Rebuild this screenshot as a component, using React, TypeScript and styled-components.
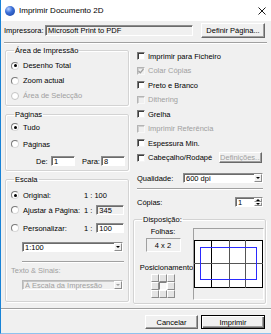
import styled, { createGlobalStyle } from "styled-components";

const GlobalStyle = createGlobalStyle`
  html, body { margin: 0; padding: 0; background: #fff; }
  body {
    font-family: "Liberation Sans", Arial, sans-serif;
    font-size: 7.5px;
    color: #000;
  }
  * { box-sizing: border-box; }
`;

const Window = styled.div`
  width: 271px;
  height: 334px;
  background: #f0f0f0;
  border-left: 1px solid #1883d7;
  border-bottom: 1px solid #8dc2ee;
  display: flex;
  flex-direction: column;
  overflow: hidden;
`;

const TitleBar = styled.div`
  height: 21px;
  background: #fff;
  display: flex;
  align-items: center;
  padding-left: 4px;
`;

const AppIcon = styled.span`
  width: 10px;
  height: 10px;
  border-radius: 50%;
  background: radial-gradient(circle at 35% 30%, #b9d2ff 0%, #3b6fd8 40%, #163e9a 100%);
`;

const TitleText = styled.span`
  margin-left: 4px;
  font-size: 8px;
  flex: 1;
`;

const CloseIcon = styled.svg`
  margin-right: 5px;
`;

const TopRow = styled.div`
  margin-top: 2px;
  height: 15px;
  display: flex;
  align-items: center;
  padding-left: 3px;
`;

const Label = styled.span<{ $w?: number; $disabled?: boolean }>`
  width: ${(p) => (p.$w ? `${p.$w}px` : "auto")};
  flex-shrink: 0;
  white-space: nowrap;
  color: ${(p) => (p.$disabled ? "#a0a0a0" : "#000")};
`;

const Field = styled.div<{ $w: number; $h?: number; $grey?: boolean; $center?: boolean }>`
  width: ${(p) => p.$w}px;
  height: ${(p) => p.$h ?? 10}px;
  flex-shrink: 0;
  background: ${(p) => (p.$grey ? "#f0f0f0" : "#fff")};
  border: 1px solid;
  border-color: #8c8c8c #ffffff #ffffff #8c8c8c;
  box-shadow: inset 1px 1px 0 #6b6b6b;
  display: flex;
  align-items: center;
  justify-content: ${(p) => (p.$center ? "center" : "flex-start")};
  padding-left: ${(p) => (p.$center ? 0 : 2)}px;
  white-space: nowrap;
  overflow: hidden;
`;

const PushButton = styled.div<{ $w: number; $h: number; $default?: boolean; $disabled?: boolean }>`
  width: ${(p) => p.$w}px;
  height: ${(p) => p.$h}px;
  flex-shrink: 0;
  background: #f0f0f0;
  border: 1px solid;
  border-color: ${(p) => (p.$default ? "#000" : "#ffffff #696969 #696969 #ffffff")};
  box-shadow: ${(p) =>
    p.$default
      ? "inset 1px 1px 0 #fff, inset -1px -1px 0 #696969, inset -2px -2px 0 #a0a0a0"
      : "inset -1px -1px 0 #a0a0a0"};
  display: flex;
  align-items: center;
  justify-content: center;
  color: ${(p) => (p.$disabled ? "#a0a0a0" : "#000")};
  white-space: nowrap;
`;

const Separator = styled.div<{ $mt: number; $ml: number; $mr: number }>`
  margin: ${(p) => p.$mt}px ${(p) => p.$mr}px 0 ${(p) => p.$ml}px;
  height: 2px;
  border-top: 1px solid #a0a0a0;
  border-bottom: 1px solid #fff;
  flex-shrink: 0;
`;

const Main = styled.div`
  display: flex;
  padding: 2px 0 0 4px;
`;

const LeftColumn = styled.div`
  width: 124px;
  display: flex;
  flex-direction: column;
  gap: 4px;
`;

const RightColumn = styled.div`
  width: 133px;
  margin-left: 4px;
  display: flex;
  flex-direction: column;
`;

const Group = styled.fieldset<{ $pt: number; $pb: number }>`
  margin: 0;
  min-width: 0;
  padding: ${(p) => p.$pt}px 4px ${(p) => p.$pb}px 5px;
  border: 1px solid #d3d3d3;
  border-radius: 2px;
  box-shadow: 1px 1px 0 #fff, inset 1px 1px 0 #fff;
  display: flex;
  flex-direction: column;
`;

const Legend = styled.legend<{ $disabled?: boolean }>`
  padding: 0 1px;
  margin-left: 3px;
  line-height: 9px;
  color: ${(p) => (p.$disabled ? "#a0a0a0" : "#000")};
`;

const OptionRow = styled.div<{ $h?: number; $mt?: number; $disabled?: boolean }>`
  height: ${(p) => p.$h ?? 14}px;
  margin-top: ${(p) => p.$mt ?? 0}px;
  display: flex;
  align-items: center;
  gap: 4px;
  color: ${(p) => (p.$disabled ? "#a0a0a0" : "#000")};
  white-space: nowrap;
  flex-shrink: 0;
`;

const RadioDot = styled.span<{ $checked?: boolean; $disabled?: boolean }>`
  width: 8px;
  height: 8px;
  flex-shrink: 0;
  border-radius: 50%;
  background: #fff;
  border: 1px solid;
  border-color: ${(p) => (p.$disabled ? "#c4c4c4" : "#7a7a7a #d8d8d8 #d8d8d8 #7a7a7a")};
  display: flex;
  align-items: center;
  justify-content: center;
  &::after {
    content: "";
    width: 3px;
    height: 3px;
    border-radius: 50%;
    background: ${(p) => (p.$checked ? "#000" : "transparent")};
  }
`;

const ValueText = styled.span`
  white-space: nowrap;
`;

const FieldsRow = styled.div`
  height: 10px;
  margin-top: 5px;
  display: flex;
  align-items: center;
  padding-left: 25px;
  gap: 2px;
`;

const SelectBox = styled.div<{ $w: number; $disabled?: boolean; $ml?: number }>`
  width: ${(p) => p.$w}px;
  height: 10px;
  margin-left: ${(p) => p.$ml ?? 0}px;
  flex-shrink: 0;
  background: ${(p) => (p.$disabled ? "#f0f0f0" : "#fff")};
  border: 1px solid;
  border-color: ${(p) => (p.$disabled ? "#b8b8b8 #fff #fff #b8b8b8" : "#8c8c8c #fff #fff #8c8c8c")};
  box-shadow: inset 1px 1px 0 ${(p) => (p.$disabled ? "#c8c8c8" : "#6b6b6b")};
  display: flex;
  align-items: center;
  padding-left: 2px;
  color: ${(p) => (p.$disabled ? "#a0a0a0" : "#000")};
  white-space: nowrap;
`;

const SelectText = styled.span`
  flex: 1;
  overflow: hidden;
`;

const ArrowButton = styled.span<{ $disabled?: boolean; $h?: number }>`
  width: 8px;
  height: ${(p) => p.$h ?? 8}px;
  background: #f0f0f0;
  border: 1px solid;
  border-color: #fff #8c8c8c #8c8c8c #fff;
  display: flex;
  align-items: center;
  justify-content: center;
  &::after {
    content: "";
    border-left: 2px solid transparent;
    border-right: 2px solid transparent;
    border-top: 2px solid ${(p) => (p.$disabled ? "#a0a0a0" : "#000")};
  }
`;

const UpArrowButton = styled(ArrowButton)`
  &::after {
    border-top: none;
    border-bottom: 2px solid #000;
  }
`;

const SpinStack = styled.span`
  display: flex;
  flex-direction: column;
  margin-left: auto;
`;

const CheckRow = styled.div`
  height: 14.5px;
  display: flex;
  align-items: center;
  padding-left: 4px;
  gap: 3px;
  white-space: nowrap;
  flex-shrink: 0;
`;

const CheckBox = styled.span<{ $disabled?: boolean }>`
  width: 8px;
  height: 8px;
  flex-shrink: 0;
  background: ${(p) => (p.$disabled ? "#f0f0f0" : "#fff")};
  border: 1px solid;
  border-color: ${(p) => (p.$disabled ? "#b4b4b4 #f8f8f8 #f8f8f8 #b4b4b4" : "#7a7a7a #f4f4f4 #f4f4f4 #7a7a7a")};
  box-shadow: inset 1px 1px 0 ${(p) => (p.$disabled ? "#d0d0d0" : "#3c3c3c")};
  display: flex;
  align-items: center;
  justify-content: center;
`;

const CheckText = styled.span<{ $disabled?: boolean }>`
  color: ${(p) => (p.$disabled ? "#a0a0a0" : "#000")};
`;

const SettingRow = styled.div<{ $mt: number }>`
  height: 10px;
  margin-top: ${(p) => p.$mt}px;
  display: flex;
  align-items: center;
  padding-left: 4px;
  flex-shrink: 0;
`;

const LayoutBody = styled.div`
  display: flex;
`;

const LayoutSide = styled.div`
  width: 48px;
  display: flex;
  flex-direction: column;
  align-items: center;
  padding-top: 3px;
`;

const SideLabel = styled.span<{ $mt?: number; $shift?: number }>`
  line-height: 9px;
  margin-top: ${(p) => p.$mt ?? 0}px;
  margin-left: ${(p) => p.$shift ?? 0}px;
  white-space: nowrap;
`;

const SheetsValue = styled.div`
  margin-top: 2px;
  width: 35px;
  height: 14px;
  border: 1px solid;
  border-color: #a0a0a0 #fff #fff #a0a0a0;
  display: flex;
  align-items: center;
  justify-content: center;
`;

const PositionGrid = styled.div`
  margin-top: 2px;
  display: grid;
  grid-template-columns: repeat(3, 8px);
  grid-template-rows: repeat(3, 8px);
`;

const PositionCell = styled.span<{ $active?: boolean }>`
  background: ${(p) => (p.$active ? "#f8f8f8" : "#e4e4e4")};
  border: 1px solid;
  border-color: ${(p) => (p.$active ? "#808080 #fff #fff #808080" : "#fff #8c8c8c #8c8c8c #fff")};
`;

const PreviewPanel = styled.div`
  margin: 4px 0 0 6px;
  width: 75px;
  height: 72px;
  border: 1px solid;
  border-color: #a0a0a0 #fff #fff #a0a0a0;
  display: flex;
  align-items: center;
  justify-content: center;
`;

const Footer = styled.div`
  display: flex;
  justify-content: flex-end;
  gap: 3px;
  padding-right: 6px;
  margin-top: 5px;
`;

function Check({ checked, disabled }: { checked?: boolean; disabled?: boolean }) {
  return (
    <CheckBox $disabled={disabled}>
      {checked && (
        <svg width="6" height="6" viewBox="0 0 6 6">
          <polyline points="0.5,3 2.3,4.8 5.5,1" fill="none" stroke={disabled ? "#a0a0a0" : "#000"} strokeWidth="1.3" />
        </svg>
      )}
    </CheckBox>
  );
}

export default function App() {
  const checks = [
    { t: "Imprimir para Ficheiro" },
    { t: "Colar Cópias", c: true, d: true },
    { t: "Preto e Branco" },
    { t: "Dithering", d: true },
    { t: "Grelha" },
    { t: "Imprimir Referência", d: true },
    { t: "Espessura Min." },
  ];
  const cols = [17.5, 35.5, 51.5];

  return (
    <Window>
      <GlobalStyle />
      <TitleBar>
        <AppIcon />
        <TitleText>Imprimir Documento 2D</TitleText>
        <CloseIcon width="8" height="8" viewBox="0 0 8 8">
          <path d="M0.5 0.5 L7.5 7.5 M7.5 0.5 L0.5 7.5" stroke="#000" strokeWidth="0.9" />
        </CloseIcon>
      </TitleBar>

      <TopRow>
        <Label $w={41}>Impressora:</Label>
        <Field $w={148} $h={11} $grey>Microsoft Print to PDF</Field>
        <PushButton $w={64} $h={15} style={{ marginLeft: 8 }}>Definir Página...</PushButton>
      </TopRow>

      <Separator $mt={4} $ml={3} $mr={4} />

      <Main>
        <LeftColumn>
          <Group $pt={3} $pb={2}>
            <Legend>Área de Impressão</Legend>
            <OptionRow $h={15}>
              <RadioDot $checked />
              Desenho Total
            </OptionRow>
            <OptionRow $h={15}>
              <RadioDot />
              Zoom actual
            </OptionRow>
            <OptionRow $h={15} $disabled>
              <RadioDot $disabled />
              Área de Selecção
            </OptionRow>
          </Group>

          <Group $pt={1} $pb={4}>
            <Legend>Páginas</Legend>
            <OptionRow>
              <RadioDot $checked />
              Tudo
            </OptionRow>
            <OptionRow $mt={3}>
              <RadioDot />
              Páginas
            </OptionRow>
            <FieldsRow>
              <Label $w={13}>De:</Label>
              <Field $w={24}>1</Field>
              <Label $w={17} style={{ marginLeft: 5 }}>Para:</Label>
              <Field $w={24}>8</Field>
            </FieldsRow>
          </Group>

          <Group $pt={4} $pb={11}>
            <Legend>Escala</Legend>
            <OptionRow>
              <RadioDot $checked />
              <Label $w={57}>Original:</Label>
              <ValueText>1 : 100</ValueText>
            </OptionRow>
            <OptionRow $mt={1}>
              <RadioDot />
              <Label $w={57}>Ajustar à Página:</Label>
              <ValueText>1 :</ValueText>
              <Field $w={28} $grey>345</Field>
            </OptionRow>
            <OptionRow $mt={4}>
              <RadioDot />
              <Label $w={57}>Personalizar:</Label>
              <ValueText>1 :</ValueText>
              <Field $w={28}>100</Field>
            </OptionRow>
            <SelectBox $w={101} $ml={11} style={{ marginTop: 7 }}>
              <SelectText>1:100</SelectText>
              <ArrowButton />
            </SelectBox>
            <Separator $mt={9} $ml={11} $mr={0} />
            <OptionRow $h={9} $mt={3} $disabled>
              Texto &amp; Sinais:
            </OptionRow>
            <SelectBox $w={101} $ml={11} $disabled style={{ marginTop: 5 }}>
              <SelectText>À Escala da Impressão</SelectText>
              <ArrowButton $disabled />
            </SelectBox>
          </Group>
        </LeftColumn>

        <RightColumn>
          <div style={{ height: 3 }} />
          {checks.map((c) => (
            <CheckRow key={c.t}>
              <Check checked={c.c} disabled={c.d} />
              <CheckText $disabled={c.d}>{c.t}</CheckText>
            </CheckRow>
          ))}
          <CheckRow>
            <Check />
            <CheckText>Cabeçalho/Rodapé</CheckText>
            <PushButton $w={43} $h={11} $disabled style={{ marginLeft: 4 }}>Definições...</PushButton>
          </CheckRow>

          <SettingRow $mt={8}>
            <Label $w={46}>Qualidade:</Label>
            <SelectBox $w={80}>
              <SelectText>600 dpi</SelectText>
              <ArrowButton />
            </SelectBox>
          </SettingRow>

          <Separator $mt={5} $ml={4} $mr={3} />

          <SettingRow $mt={7}>
            <Label $w={98}>Cópias:</Label>
            <Field $w={28} style={{ paddingRight: 0 }}>
              1
              <SpinStack>
                <UpArrowButton $h={4} />
                <ArrowButton $h={4} />
              </SpinStack>
            </Field>
          </SettingRow>

          <Group $pt={0} $pb={3} style={{ marginTop: 8 }}>
            <Legend>Disposição:</Legend>
            <LayoutBody>
              <LayoutSide>
                <SideLabel>Folhas:</SideLabel>
                <SheetsValue>4 x 2</SheetsValue>
                <SideLabel $mt={11} $shift={9}>Posicionamento:</SideLabel>
                <PositionGrid>
                  {Array.from({ length: 9 }).map((_, i) => (
                    <PositionCell key={i} $active={i === 4} />
                  ))}
                </PositionGrid>
              </LayoutSide>
              <PreviewPanel>
                <svg width="69" height="48" viewBox="0 0 69 48">
                  <rect x="0.5" y="0.5" width="68" height="47" fill="#fff" stroke="#000" />
                  {cols.map((x, i) => (
                    <line key={x} x1={x} y1="0" x2={x} y2="48" stroke={i === 0 ? "#000" : "#555"} />
                  ))}
                  <line x1="0" y1="23.5" x2="69" y2="23.5" stroke="#555" />
                  <rect x="6.5" y="7.5" width="56" height="32" fill="none" stroke="#2a2aff" />
                </svg>
              </PreviewPanel>
            </LayoutBody>
          </Group>
        </RightColumn>
      </Main>

      <Separator $mt={4} $ml={0} $mr={0} />

      <Footer>
        <PushButton $w={53} $h={14}>Cancelar</PushButton>
        <PushButton $w={64} $h={14} $default>Imprimir</PushButton>
      </Footer>
    </Window>
  );
}
